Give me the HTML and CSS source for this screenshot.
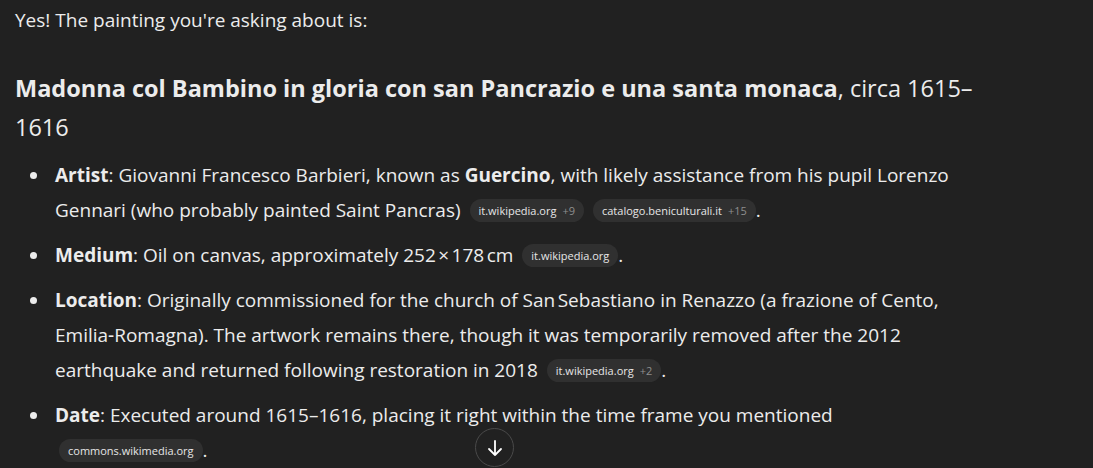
FILE: index.html
```html
<!DOCTYPE html>
<html>
<head>
<meta charset="utf-8">
<link rel="stylesheet" href="styles.css">
</head>
<body>
<main class="msg">
  <p class="intro">Yes! The painting you're asking about is:</p>
  <h3 class="title"><strong>Madonna col Bambino in gloria con san Pancrazio e una santa monaca</strong>, circa 1615–1616</h3>
  <ul class="facts">
    <li><strong>Artist</strong>: Giovanni Francesco Barbieri, known as <strong>Guercino</strong>, with likely assistance from his pupil Lorenzo Gennari (who probably painted Saint Pancras) <span class="pill">it.wikipedia.org<span class="more">+9</span></span> <span class="pill">catalogo.beniculturali.it<span class="more">+15</span></span>.</li>
    <li><strong>Medium</strong>: Oil on canvas, approximately 252&#8239;×&#8239;178&#8239;cm <span class="pill">it.wikipedia.org</span>.</li>
    <li><strong>Location</strong>: Originally commissioned for the church of San&#8239;Sebastiano in Renazzo (a frazione of Cento, Emilia&#8209;Romagna). The artwork remains there, though it was temporarily removed after the 2012 earthquake and returned following restoration in 2018 <span class="pill">it.wikipedia.org<span class="more">+2</span></span>.</li>
    <li><strong>Date</strong>: Executed around 1615–1616, placing it right within the time frame you mentioned <span class="pill">commons.wikimedia.org</span>.</li>
  </ul>
</main>
<button class="scroll-down" aria-label="Scroll down">
  <svg width="20" height="20" viewBox="0 0 20 20" fill="none" stroke="#fff" stroke-width="1.8" stroke-linecap="round" stroke-linejoin="round"><path d="M10 3v14M4 11l6 6 6-6"/></svg>
</button>
</body>
</html>
```
FILE: styles.css
```css
html, body {
  margin: 0;
  padding: 0;
  background: #212121;
  height: 100%;
  overflow: hidden;
}
body {
  font-family: "Open Sans", "Noto Sans", sans-serif;
  color: #ececec;
  font-size: 19px;
}
.msg {
  width: 960px;
  padding-left: 15px;
}
.intro {
  margin: 0;
  padding-top: 3px;
  line-height: 35px;
}
.title {
  margin: 31px 0 0;
  font-size: 23.5px;
  line-height: 39px;
  font-weight: 400;
}
.title strong {
  font-weight: 700;
}
.facts {
  margin: 11px 0 0;
  padding-left: 35px;
  line-height: 35px;
  list-style: disc;
}
.facts li {
  margin-bottom: 10px;
  padding-left: 5px;
}
.facts strong {
  font-weight: 700;
}
.pill {
  display: inline-block;
  background: #303030;
  color: #e6e6e6;
  font-size: 11px;
  line-height: 23px;
  height: 23px;
  padding: 0 9px;
  border-radius: 12px;
  vertical-align: 2px;
  margin-left: 4px;
}
.more {
  color: #8e8e8e;
  margin-left: 6px;
}
.scroll-down {
  position: absolute;
  left: 475px;
  top: 428px;
  width: 39px;
  height: 39px;
  border-radius: 50%;
  border: 1px solid #4a4a4a;
  background: #212121;
  display: flex;
  align-items: center;
  justify-content: center;
  padding: 0;
}
```
